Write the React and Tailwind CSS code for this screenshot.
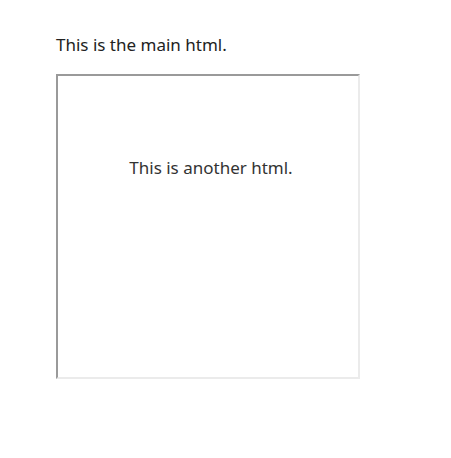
export default function App() {
  return (
    <div className="min-h-screen bg-white pl-[56px] pt-[34px] font-['Noto_Sans',sans-serif]">
      <p className="text-[17px] leading-[22px] text-[#222]">This is the main html.</p>
      <div className="mt-[18px] w-[304px] h-[305px] border-2 border-t-[#9a9a9a] border-l-[#9a9a9a] border-b-[#ebebeb] border-r-[#ebebeb] bg-white">
        <p className="mt-[81px] pl-[6px] text-center text-[17px] leading-[22px] text-[#333]">This is another html.</p>
      </div>
    </div>
  );
}
